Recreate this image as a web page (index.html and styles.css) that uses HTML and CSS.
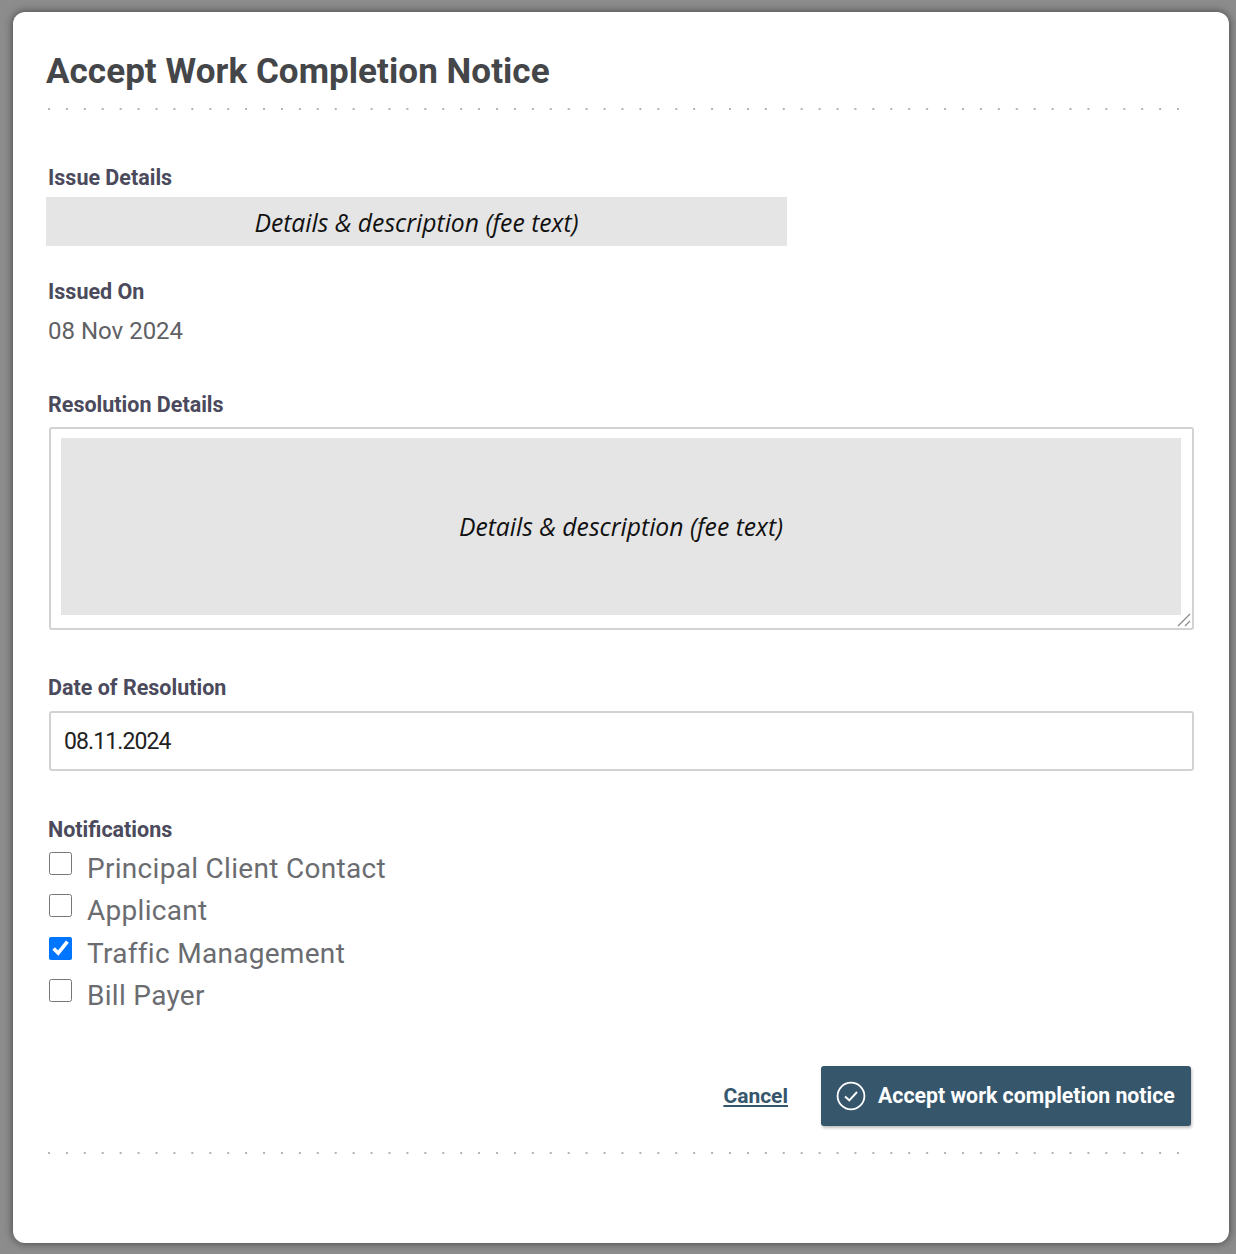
FILE: index.html
```html
<!DOCTYPE html>
<html>
<head>
    <title>Accept Work Completion Notice</title>
    <link rel="stylesheet" href="styles.css">
</head>
<body>
    <div class="modal">
        <h2 class="modal-title">Accept Work Completion Notice</h2>
        <div class="dots"></div>

        <div class="field-issue">
            <div class="field-label">Issue Details</div>
            <div class="fee-box">Details &amp; description (fee text)</div>
        </div>

        <div class="field-issued">
            <div class="field-label">Issued On</div>
            <div class="issued-value">08 Nov 2024</div>
        </div>

        <div class="field-resolution">
            <div class="field-label">Resolution Details</div>
            <div class="textarea-box">
                <div class="fee-fill">Details &amp; description (fee text)</div>
                <svg class="resizer" width="14" height="14" viewBox="0 0 14 14">
                    <path d="M1 13 L13 1 M8 13 L13 8" stroke="#8a8a8a" stroke-width="1.2" fill="none"/>
                </svg>
            </div>
        </div>

        <div class="field-date">
            <div class="field-label">Date of Resolution</div>
            <input class="date-input" type="text" value="08.11.2024">
        </div>

        <div class="field-notify">
            <div class="field-label">Notifications</div>
            <label class="check-row"><input type="checkbox"><span>Principal Client Contact</span></label>
            <label class="check-row"><input type="checkbox"><span>Applicant</span></label>
            <label class="check-row"><input type="checkbox" checked><span>Traffic Management</span></label>
            <label class="check-row"><input type="checkbox"><span>Bill Payer</span></label>
        </div>

        <div class="actions">
            <a class="cancel-link" href="#">Cancel</a>
            <button class="accept-btn">
                <svg width="30" height="30" viewBox="0 0 30 30">
                    <circle cx="15" cy="15" r="13.4" stroke="#fff" stroke-width="1.8" fill="none"/>
                    <path d="M9 15.5 L13.3 19.3 L21 11" stroke="#fff" stroke-width="1.9" fill="none"/>
                </svg>
                Accept work completion notice
            </button>
        </div>
        <div class="dots dots-bottom"></div>
    </div>
</body>
</html>
```

FILE: styles.css
```css
* {
    box-sizing: border-box;
}
body {
    margin: 0;
    width: 1236px;
    height: 1254px;
    padding: 12px 7px 11px 13px;
    background-color: #8c8c8c;
    font-family: Roboto, sans-serif;
    overflow: hidden;
}
.modal {
    height: 1231px;
    padding: 37px 35px 0 33px;
    background-color: #fff;
    border-radius: 12px;
    box-shadow: 0 0 8px rgba(0, 0, 0, 0.55);
}
.modal-title {
    margin: 0;
    font-size: 35px;
    line-height: 46px;
    font-weight: 700;
    letter-spacing: 0.06px;
    color: #444649;
}
.dots {
    width: 1134px;
    margin: 13px 0 0 2px;
    height: 2px;
    background-image: radial-gradient(circle, #b4b4b4 1px, transparent 1px);
    background-size: 17.93px 2px;
    background-position: -8px 0;
}
.field-label {
    padding-top: 1px;
    font-size: 21.5px;
    line-height: 26px;
    font-weight: 700;
    color: #4b4a5c;
    margin-left: 2px;
}
.field-issue {
    margin-top: 54px;
}
.fee-box {
    width: 741px;
    height: 49px;
    margin-top: 6px;
    background-color: #e5e5e5;
    text-align: center;
    font-family: "Open Sans", sans-serif;
    font-style: italic;
    font-size: 24.7px;
    line-height: 51px;
    color: #111;
}
.field-issued {
    margin-top: 32px;
}
.issued-value {
    margin: 12px 0 0 2px;
    font-size: 24px;
    line-height: 28px;
    color: #5f6165;
}
.field-resolution {
    margin-top: 46px;
}
.textarea-box {
    position: relative;
    width: 1145px;
    height: 203px;
    margin: 9px 0 0 3px;
    padding: 9px 11px 13px 10px;
    border: 2px solid #d0d2d4;
    border-radius: 3px;
}
.fee-fill {
    height: 177px;
    background-color: #e5e5e5;
    text-align: center;
    font-family: "Open Sans", sans-serif;
    font-style: italic;
    font-size: 24.7px;
    line-height: 177px;
    color: #111;
}
.resizer {
    position: absolute;
    right: 1px;
    bottom: 1px;
}
.field-date {
    margin-top: 44px;
}
.date-input {
    display: block;
    width: 1145px;
    height: 60px;
    margin: 10px 0 0 3px;
    padding: 0 13px;
    border: 2px solid #d0d2d4;
    border-radius: 3px;
    font-family: Roboto, sans-serif;
    font-size: 23px;
    letter-spacing: -0.9px;
    color: #222;
    outline: none;
}
.field-notify {
    margin-top: 45px;
}
.check-row {
    display: flex;
    align-items: flex-start;
    height: 42.4px;
    margin-left: 3px;
    font-size: 28px;
    line-height: 38px;
    letter-spacing: 0.3px;
    color: #6a6c70;
}
.check-row input {
    width: 23px;
    height: 23px;
    margin: 2px 15px 0 0;
}
.field-notify .field-label {
    margin-bottom: 7px;
}
.actions {
    display: flex;
    justify-content: flex-end;
    align-items: center;
    gap: 33px;
    margin: 46px 3px 0 0;
}
.cancel-link {
    font-size: 21px;
    font-weight: 700;
    color: #35566b;
}
.accept-btn {
    display: flex;
    align-items: center;
    gap: 12px;
    width: 370px;
    height: 60px;
    padding: 0 0 0 15px;
    border: none;
    border-radius: 3px;
    background-color: #35566b;
    box-shadow: 1px 2px 3px rgba(0, 0, 0, 0.25);
    font-family: Roboto, sans-serif;
    font-size: 21.3px;
    font-weight: 700;
    color: #fff;
}
.dots-bottom {
    margin-top: 26px;
}
```
